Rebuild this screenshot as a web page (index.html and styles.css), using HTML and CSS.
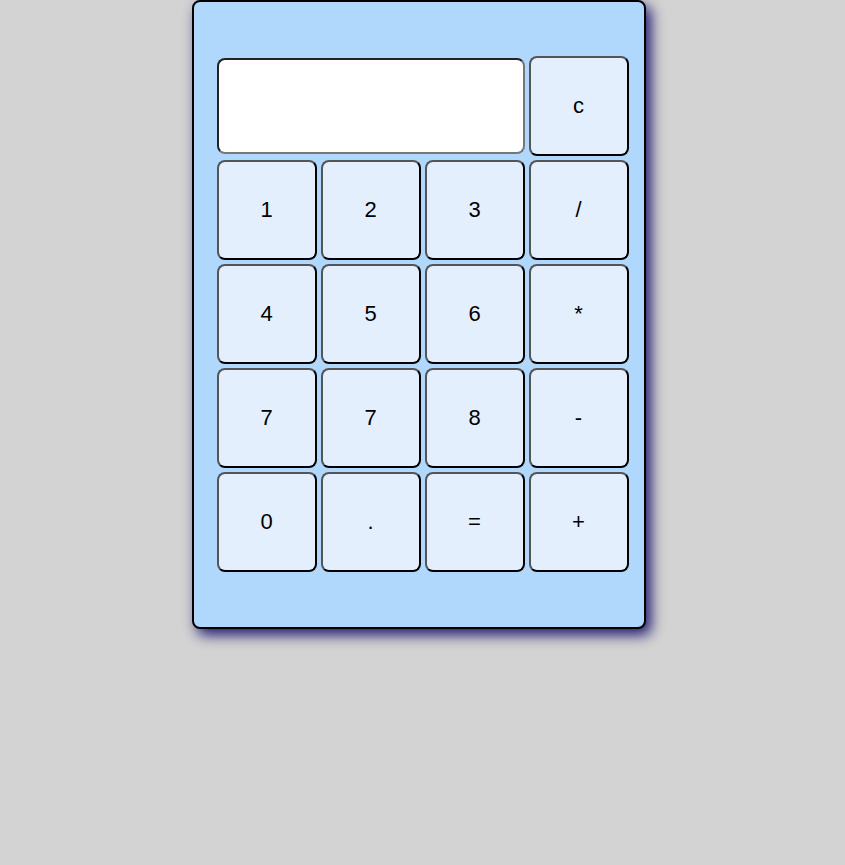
FILE: index.html
```html
<!DOCTYPE html>
<html>
<head>
<meta charset="utf-8">
<link rel="stylesheet" href="styles.css">
</head>
<body>
<div class="calc">
  <div class="grid">
    <input class="display" type="text">
    <button class="key">c</button>
    <button class="key">1</button>
    <button class="key">2</button>
    <button class="key">3</button>
    <button class="key">/</button>
    <button class="key">4</button>
    <button class="key">5</button>
    <button class="key">6</button>
    <button class="key">*</button>
    <button class="key">7</button>
    <button class="key">7</button>
    <button class="key">8</button>
    <button class="key">-</button>
    <button class="key">0</button>
    <button class="key">.</button>
    <button class="key">=</button>
    <button class="key">+</button>
  </div>
</div>
</body>
</html>
```
FILE: styles.css
```css
html, body {
  margin: 0;
  padding: 0;
  background: #d3d3d3;
  font-family: "Liberation Sans", Arial, sans-serif;
}
body {
  min-height: 865px;
}
.calc {
  box-sizing: border-box;
  width: 454px;
  height: 629px;
  margin-left: 192px;
  background: #b0d7fc;
  border: 2px solid #000;
  border-radius: 8px;
  box-shadow: 5px 6px 14px #1f186e;
  padding: 54px 15px 0 23px;
}
.grid {
  display: grid;
  grid-template-columns: repeat(4, 100px);
  grid-auto-rows: 100px;
  gap: 4px;
}
.display {
  grid-column: span 3;
  align-self: center;
  box-sizing: border-box;
  height: 96px;
  margin: 0;
  background: #fff;
  border: 2px solid;
  border-top-color: #222;
  border-left-color: #222;
  border-bottom-color: #777;
  border-right-color: #777;
  border-radius: 8px;
  font-size: 22px;
  font-family: "Liberation Sans", Arial, sans-serif;
}
.key {
  box-sizing: border-box;
  width: 100px;
  height: 100px;
  margin: 0;
  padding: 0 1px 0 0;
  background: #e3effc;
  border: 2px solid;
  border-top-color: #555;
  border-left-color: #555;
  border-bottom-color: #000;
  border-right-color: #000;
  border-radius: 8px;
  font-size: 22px;
  font-family: "Liberation Sans", Arial, sans-serif;
  color: #000;
}
```
